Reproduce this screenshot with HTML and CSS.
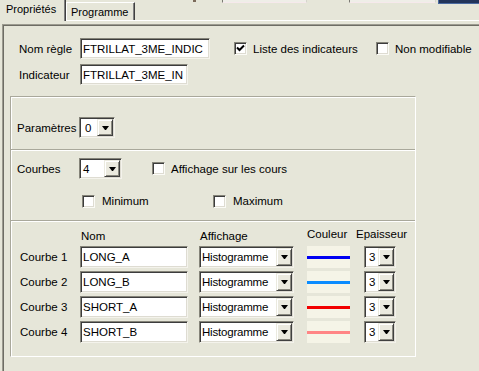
FILE: index.html
```html
<!DOCTYPE html>
<html lang="fr">
<head>
<meta charset="utf-8">
<title>Propriétés</title>
<link rel="stylesheet" href="styles.css">
</head>
<body>
<div class="header">
  <div class="tab active">Propriétés</div>
  <div class="tab">Programme</div>
  <span class="stub-g"></span>
  <span class="stub s1"></span>
  <span class="stub s2"></span>
  <span class="navy"></span>
</div>
<div class="frame">
  <div class="row">
    <span class="lbl">Nom règle</span>
    <span class="field f1">FTRILLAT_3ME_INDIC</span>
    <label class="chk c1"><span class="cb"><svg width="9" height="9" viewBox="0 0 9 9"><path d="M1 3.5 L3.5 6 L8 1.5" fill="none" stroke="#000" stroke-width="2"/></svg></span>Liste des indicateurs</label>
    <label class="chk"><span class="cb"></span>Non modifiable</label>
  </div>
  <div class="row r2">
    <span class="lbl">Indicateur</span>
    <span class="field f2">FTRILLAT_3ME_IN</span>
  </div>

  <div class="group">
    <div class="sec s-param">
      <div class="line">
        <span class="glbl">Paramètres</span>
        <span class="select w36"><span class="val">0</span><span class="btn"><i></i></span></span>
      </div>
    </div>
    <div class="sec s-courbes">
      <div class="line">
        <span class="glbl">Courbes</span>
        <span class="select w43"><span class="val">4</span><span class="btn"><i></i></span></span>
        <label class="chk c-aff"><span class="cb"></span>Affichage sur les cours</label>
      </div>
      <div class="line minmax">
        <label class="chk c-min"><span class="cb"></span>Minimum</label>
        <label class="chk"><span class="cb"></span>Maximum</label>
      </div>
    </div>
    <div class="sec s-table">
      <div class="grid">
        <span class="h h-nom">Nom</span>
        <span class="h h-aff">Affichage</span>
        <span class="h h-col">Couleur</span>
        <span class="h h-ep">Epaisseur</span>

        <span class="rl">Courbe 1</span>
        <span class="field c-nom">LONG_A</span>
        <span class="select c-aff2"><span class="val">Histogramme</span><span class="btn"><i></i></span></span>
        <span class="swatch"><span class="ln blue"></span></span>
        <span class="select c-ep"><span class="val">3</span><span class="btn"><i></i></span></span>

        <span class="rl">Courbe 2</span>
        <span class="field c-nom">LONG_B</span>
        <span class="select c-aff2"><span class="val">Histogramme</span><span class="btn"><i></i></span></span>
        <span class="swatch"><span class="ln lblue"></span></span>
        <span class="select c-ep"><span class="val">3</span><span class="btn"><i></i></span></span>

        <span class="rl">Courbe 3</span>
        <span class="field c-nom">SHORT_A</span>
        <span class="select c-aff2"><span class="val">Histogramme</span><span class="btn"><i></i></span></span>
        <span class="swatch"><span class="ln red"></span></span>
        <span class="select c-ep"><span class="val">3</span><span class="btn"><i></i></span></span>

        <span class="rl">Courbe 4</span>
        <span class="field c-nom">SHORT_B</span>
        <span class="select c-aff2"><span class="val">Histogramme</span><span class="btn"><i></i></span></span>
        <span class="swatch"><span class="ln pink"></span></span>
        <span class="select c-ep"><span class="val">3</span><span class="btn"><i></i></span></span>
      </div>
    </div>
  </div>
</div>
</body>
</html>
```
FILE: styles.css
```css
* { box-sizing: border-box; }
html, body { margin: 0; padding: 0; }
body {
  background: #e6e6d9;
  font-family: "Liberation Sans", Arial, sans-serif;
  font-size: 11.5px;
  color: #000;
  width: 479px;
  height: 371px;
  overflow: hidden;
}

/* ---------- tab strip ---------- */
.header {
  display: flex;
  align-items: flex-start;
  height: 21px;
  border-bottom: 1px solid #fff;
}
.tab {
  white-space: nowrap;
  flex: none;
  font-size: 11px;
}
.tab.active {
  width: 66px;
  height: 21px;
  padding: 2px 0 0 6px;
  line-height: 14px;
  background: #e6e6d9;
  border-right: 1px solid #404040;
  box-shadow: inset -1px 0 #808080;
}
.tab:not(.active) {
  margin-top: 2px;
  width: 69px;
  height: 18px;
  padding: 1px 0 0 4px;
  line-height: 16px;
  border-top: 1px solid #fff;
  border-left: 1px solid #fff;
  border-right: 1px solid #404040;
  box-shadow: inset -1px 0 #808080;
}
.stub-g {
  flex: none;
  width: 3px;
  height: 2px;
  margin-left: 58px;
  background: #7b6a5a;
}
.stub {
  flex: none;
  height: 3px;
  background: #efeee8;
  border-left: 1px solid #7a7a72;
  border-bottom: 1px solid #f6e9ec;
  border-right: 1px solid #d6d5cc;
}
.s1 { margin-left: 26px; width: 85px; }
.s2 { margin-left: 42px; width: 87px; }
.navy {
  flex: 1;
  height: 4px;
  margin-left: 2px;
  background: #22345a;
  border-left: 1px solid #4a6aa0;
  border-bottom: 1px solid #4a6aa0;
}

/* ---------- frame ---------- */
.frame {
  margin: 3px 0 0 2px;
  height: 360px;
  padding-top: 13px;
  border-top: 1px solid #9c9b90;
  border-left: 1px solid #9c9b90;
  box-shadow: inset 1px 1px #6e6d65;
}
.row {
  display: flex;
  align-items: center;
  height: 21px;
  padding-left: 16px;
}
.r2 { margin-top: 5px; }
.lbl { width: 61px; flex: none; }

.field {
  display: flex;
  align-items: center;
  height: 21px;
  padding-left: 2px;
  background: #fff;
  border: 1px solid;
  border-color: #858479 #f4f3ec #f4f3ec #858479;
  box-shadow: inset 1px 1px #3c3c3c, inset -1px -1px #dedcd2;
  white-space: nowrap;
  overflow: hidden;
  flex: none;
}
.f1 { width: 130px; }
.f2 { width: 108px; }

.chk {
  display: flex;
  align-items: center;
  gap: 6px;
  white-space: nowrap;
  flex: none;
}
.c1 { margin-left: 24px; width: 142px; }
.cb {
  display: flex;
  align-items: center;
  justify-content: center;
  width: 13px;
  height: 13px;
  flex: none;
  background: #fff;
  border: 1px solid;
  border-color: #858479 #fbfbf6 #fbfbf6 #858479;
  box-shadow: inset 1px 1px #3c3c3c, inset -1px -1px #dedcd2;
}
.cb svg { display: block; }

/* ---------- group box ---------- */
.group {
  margin: 11px 0 0 7px;
  width: 406px;
  border-top: 1px solid #a9a89b;
  border-left: 1px solid #a9a89b;
  border-right: 1px solid #fff;
  border-bottom: 1px solid #fff;
  box-shadow: inset 1px 1px #fff;
}
.sec { padding-left: 6px; }
.sec + .sec { box-shadow: inset 0 1px #fff; }
.s-param {
  padding-top: 20px;
  padding-bottom: 11px;
  border-bottom: 1px solid #a9a89b;
}
.s-courbes {
  padding-top: 8px;
  padding-bottom: 11px;
  border-bottom: 1px solid #a9a89b;
}
.s-table {
  padding: 9px 0 13px 9px;
}
.line {
  display: flex;
  align-items: center;
}
.glbl { width: 62px; flex: none; }
.c-aff { margin-left: 30px; }
.minmax {
  height: 16px;
  margin-top: 14px;
  padding-left: 65px;
}
.c-min { width: 131px; }
.minmax .chk { gap: 7px; }

/* ---------- combo box ---------- */
.select {
  display: flex;
  height: 21px;
  background: #fff;
  border: 1px solid;
  border-color: #858479 #f4f3ec #f4f3ec #858479;
  box-shadow: inset 1px 1px #3c3c3c, inset -1px -1px #dedcd2;
  padding: 1px;
  flex: none;
}
.select .val {
  flex: 1;
  display: flex;
  align-items: center;
  padding-left: 1px;
  white-space: nowrap;
  overflow: hidden;
}
.select .btn {
  width: 16px;
  flex: none;
  display: flex;
  align-items: center;
  justify-content: center;
  background: #ebeadf;
  border: 1px solid;
  border-color: #ebeadf #404040 #404040 #ebeadf;
  box-shadow: inset 1px 1px #fff, inset -1px -1px #8a897f;
}
.select .btn i {
  display: block;
  width: 1px;
  height: 0;
  border-left: 3px solid transparent;
  border-right: 3px solid transparent;
  border-top: 4px solid #000;
  box-sizing: content-box;
}
.w36 { width: 36px; }
.w36 .val { padding-left: 4px; }
.w43 { width: 43px; }
.w43 .val { padding-left: 2px; }

/* ---------- curves table ---------- */
.grid {
  display: grid;
  grid-template-columns: [lbl] 60px [nom] 108px 11px [aff] 95px 13px [col] 43px 14px [ep] 32px;
  grid-template-rows: 13px repeat(4, 22px);
  row-gap: 3px;
  align-items: stretch;
}
.h {
  white-space: nowrap;
  line-height: 13px;
}
.h-nom { grid-column: nom; padding-left: 1px; }
.h-aff { grid-column: aff; padding-left: 1px; }
.h-col { grid-column: col; margin-top: -2px; }
.h-ep { grid-column: ep; margin-left: -8px; margin-top: -2px; }
.rl {
  grid-column: lbl;
  align-self: center;
  white-space: nowrap;
}
.c-nom { grid-column: nom; height: 22px; }
.c-aff2 { grid-column: aff; height: 22px; }
.c-aff2 .val { letter-spacing: -0.2px; }
.c-ep { grid-column: ep; height: 22px; }
.c-ep .val { padding-left: 3px; }
.swatch {
  grid-column: col;
  display: flex;
  align-items: center;
  background: #f5f4e7;
}
.ln { display: block; width: 100%; height: 3px; }
.blue { background: #0000f2; }
.lblue { background: #0a8cff; }
.red { background: #f20000; }
.pink { background: #ff8585; }
```
